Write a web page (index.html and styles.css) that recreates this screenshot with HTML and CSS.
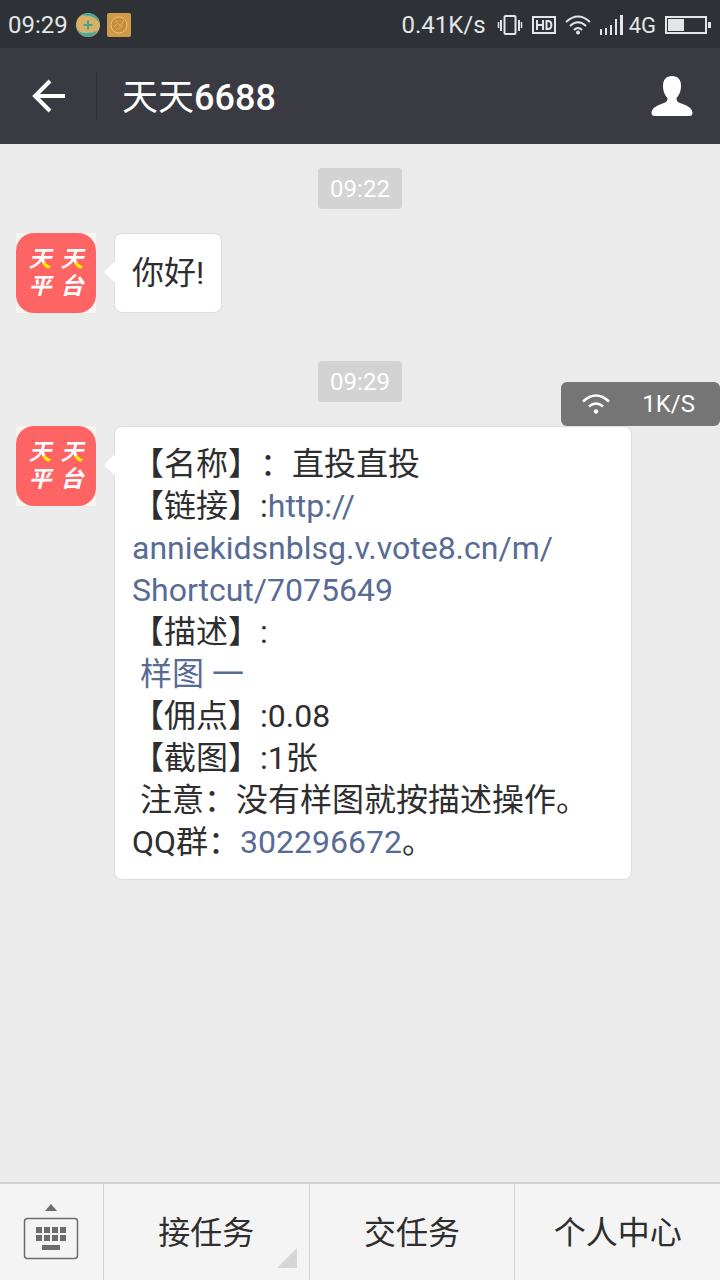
FILE: index.html
```
<!DOCTYPE html>
<html lang="zh-CN">
<head>
    <meta charset="UTF-8">
    <meta name="viewport" content="width=device-width, initial-scale=1.0">
    <title>天天6688</title>
    <link rel="stylesheet" href="styles.css">
</head>
<body>
    <div class="status">
        <span class="clock">09:29</span>
        <svg class="app-icon" width="24" height="24" viewBox="0 0 24 24">
            <circle cx="12" cy="12" r="12" fill="#d5b268"/>
            <path d="M5 2.500A12 12 0 0 1 22 6Q23 8 23.500 11Q20 3 12 3Q8 2 5 2.500zM.5 15Q4 21 11 20Q18 20 22 17Q18 24 12 24Q3 23 .5 15z" fill="#45a9a4"/>
            <path d="M12 7.500v9M7.500 12h9" stroke="#4f9f8c" stroke-width="2"/>
        </svg>
        <svg width="26" height="26" viewBox="0 0 26 26">
            <rect x="1" y="1" width="24" height="24" rx="2" fill="#cf9a4c"/>
            <circle cx="13" cy="13" r="8" fill="#c58d3b" stroke="#e9c27c" stroke-width="1"/>
            <path d="M8 15l4-4 2 3 4-6M10 18l7-4M9 9l3 1" stroke="#dcb068" stroke-width="1" fill="none"/>
        </svg>
        <div class="status-right">
            <span class="speed">0.41K/s</span>
            <svg width="26" height="22" viewBox="0 0 26 22" fill="none" stroke="#e2e6e8">
                <rect x="7.500" y="2" width="11" height="18" rx="1" stroke-width="2"/>
                <path d="M4 6v11M22 6v11" stroke-width="2"/>
                <path d="M1.500 8v6M24.500 8v6" stroke-width="1.500"/>
            </svg>
            <svg width="24" height="20" viewBox="0 0 24 20" fill="none" stroke="#e2e6e8" stroke-width="2">
                <rect x="1" y="2" width="22" height="16"/>
                <path d="M5 5v10M11 5v10M5 10h6M14.500 6v8h1.500c4.500 0 4.500-8 0-8z"/>
            </svg>
            <svg width="26" height="20" viewBox="0 0 26 20" fill="none" stroke="#e2e6e8" stroke-width="2">
                <path d="M1 7Q13-4 25 7M5 11Q13 3.500 21 11M9 15Q13 11 17 15"/>
                <circle cx="13" cy="17.500" r="2" fill="#e2e6e8" stroke="none"/>
            </svg>
            <svg width="24" height="20" viewBox="0 0 24 20" fill="#e2e6e8">
                <path d="M0 14h2v6H0zM5 13h2v7H5zM10 10h2v10h-2zM15 4h2v16h-2zM20 0h3v20h-3z"/>
            </svg>
            <span class="network">4G</span>
            <svg class="battery" width="46" height="18" viewBox="0 0 46 18">
                <rect x="1" y="1" width="40" height="16" fill="none" stroke="#e2e6e8" stroke-width="2"/>
                <path d="M3 3h16v12H3zM43 6h3v6h-3z" fill="#e2e6e8"/>
            </svg>
        </div>
    </div>
    <header class="header">
        <button class="back" aria-label="返回">
            <svg width="34" height="34" viewBox="0 0 34 34" fill="none" stroke="#fff" stroke-width="4">
                <path d="M18 2L3 17l15 15M3 17h30"/>
            </svg>
        </button>
        <h1>天天<span>6688</span></h1>
        <button class="profile" aria-label="个人资料">
            <svg width="42" height="42" viewBox="0 0 42 42" fill="#fff">
                <path d="M21 1c6 0 9 4 9 9.500 0 6-2 10-4.500 12.500 0 3 1 4 3.500 5 6 2 12 4.500 12.500 9.500 0 2.500-1 3.500-3 3.500h-35C1.500 41 .5 40 .5 37.500 1 32.500 7 30 13 28c2.500-1 3.500-2 3.500-5C14 20.500 12 16.500 12 10.500 12 5 15 1 21 1z"/>
            </svg>
        </button>
    </header>
    <main class="chat">
        <time class="stamp">09:22</time>
        <div class="message">
            <div class="avatar"><div class="logo"><b class="tian">天</b><b class="tian">天</b><b>平</b><b>台</b></div></div>
            <div class="bubble">你好!</div>
        </div>
        <time class="stamp">09:29</time>
        <div class="message">
            <div class="avatar"><div class="logo"><b class="tian">天</b><b class="tian">天</b><b>平</b><b>台</b></div></div>
            <div class="bubble long">
                <p>【名称】：直投直投</p>
                <p>【链接】:<a href="#">http://<br>anniekidsnblsg.v.vote8.cn/m/<br>Shortcut/7075649</a></p>
                <p>【描述】:</p>
                <p> <a href="#">样图 一</a></p>
                <p>【佣点】:0.08</p>
                <p>【截图】:1张</p>
                <p> 注意：没有样图就按描述操作。</p>
                <p>QQ群：<a href="#">302296672</a>。</p>
            </div>
        </div>
    </main>
    <div class="net-speed">
        <svg width="28" height="20" viewBox="0 0 28 20" fill="none" stroke="#fff" stroke-width="2.500">
            <path d="M1 7.500Q14-4.500 27 7.500M7 12.500Q14 6.500 21 12.500"/>
            <circle cx="14" cy="17.500" r="2.200" fill="#fff" stroke="none"/>
        </svg>
        <span>1K/S</span>
    </div>
    <nav class="menu">
        <button class="keyboard" aria-label="键盘">
            <svg width="56" height="58" viewBox="0 0 56 58" fill="#6c6c6c">
                <path d="M22 8l6-7 6 7z"/>
                <rect x="1.500" y="15.500" width="53" height="40" rx="3" fill="none" stroke="#6c6c6c" stroke-width="1.500"/>
                <path d="M13 24h6v6h-6zM21 24h6v6h-6zM29 24h6v6h-6zM37 24h6v6h-6zM13 32h6v6h-6zM21 32h6v6h-6zM29 32h6v6h-6zM37 32h6v6h-6zM19 42h18v5H19z"/>
            </svg>
        </button>
        <button class="has-sub">接任务</button>
        <button>交任务</button>
        <button>个人中心</button>
    </nav>
</body>
</html>
```
FILE: styles.css
```
*{
    margin: 0;
    padding: 0;
    box-sizing: border-box;
}
body{
    display: flex;
    flex-direction: column;
    min-height: 100vh;
    position: relative;
    font-family: Roboto, "Noto Sans CJK SC", sans-serif;
    font-size: 32px;
    color: #2e2e2e;
    background-color: #ebebeb;
    text-spacing-trim: space-all;
}
button{
    border: none;
    background: none;
    font: inherit;
    color: inherit;
    cursor: pointer;
}
svg{
    display: block;
    flex: none;
}
a{
    color: #576b95;
    text-decoration: none;
}
.status{
    display: flex;
    align-items: center;
    height: 48px;
    padding: 2px 9px 0 8px;
    background-color: #2e3135;
    color: #e2e6e8;
    font-size: 24px;
}
.app-icon{
    margin: 0 6px 0 8px;
}
.status-right{
    display: flex;
    align-items: center;
    gap: 9px;
    margin-left: auto;
}
.speed{
    margin-right: 2px;
}
.network{
    margin-left: -4px;
    font-size: 22px;
}
.header{
    display: flex;
    align-items: center;
    height: 96px;
    background-color: #393a42;
    color: #fff;
}
.back{
    height: 48px;
    width: 97px;
    padding-left: 32px;
    border-right: 1px solid #2e3036;
}
.header h1{
    flex: 1;
    padding: 0 0 4px 25px;
    font-size: 36px;
    font-weight: 400;
}
.header h1 span{
    font-weight: 500;
}
.profile{
    padding-right: 27px;
}
.chat{
    flex: 1;
    display: flex;
    flex-direction: column;
    align-items: center;
    padding: 24px 16px;
}
.stamp{
    height: 41px;
    padding: 0 12px;
    margin-bottom: 24px;
    border-radius: 4px;
    background-color: #d3d3d3;
    color: #fff;
    font-size: 24px;
    line-height: 43px;
}
.message{
    display: flex;
    align-items: flex-start;
    gap: 18px;
    width: 100%;
    margin-bottom: 48px;
}
.avatar{
    width: 80px;
    height: 80px;
    flex: none;
    background-color: #f8f4f2;
}
.logo{
    display: grid;
    grid-template-columns: 32px 32px;
    grid-auto-rows: 27px;
    justify-content: center;
    align-content: center;
    height: 80px;
    border-radius: 18px;
    background-color: #ff6464;
    color: #fff;
    font-size: 23px;
    font-style: italic;
    line-height: 27px;
    text-align: center;
}
.tian{
    background: radial-gradient(circle at 25px 25px, #ffee00 10px, #fff 10px);
    background-clip: text;
    -webkit-background-clip: text;
    color: transparent;
}
.bubble{
    position: relative;
    padding: 18px 17px;
    border: 1px solid #dedede;
    border-radius: 8px;
    background-color: #fff;
    line-height: 42px;
}
.bubble::before{
    content: "";
    position: absolute;
    left: -8px;
    top: 31px;
    width: 14px;
    height: 14px;
    background-color: #fff;
    transform: rotate(45deg);
}
.long{
    flex: 0 1 518px;
    padding: 16px 17px;
}
.long p{
    white-space: pre-wrap;
}
.net-speed{
    position: absolute;
    top: 382px;
    right: 0;
    display: flex;
    align-items: center;
    gap: 32px;
    height: 44px;
    padding: 0 25px 0 21px;
    border-radius: 6px;
    background-color: #757575;
    color: #fff;
    font-size: 24px;
}
.menu{
    display: flex;
    height: 98px;
    border-top: 2px solid #d2d2d2;
    background-color: #f4f4f4;
}
.menu button{
    position: relative;
    flex: 1;
    padding-bottom: 4px;
    border-left: 1px solid #d2d2d2;
}
.menu .keyboard{
    flex: 0 0 103px;
    padding: 0 0 0 23px;
    border-left: none;
}
.has-sub::after{
    content: "";
    position: absolute;
    right: 12px;
    bottom: 12px;
    border-left: 20px solid transparent;
    border-bottom: 20px solid #d6d6d6;
}
```
